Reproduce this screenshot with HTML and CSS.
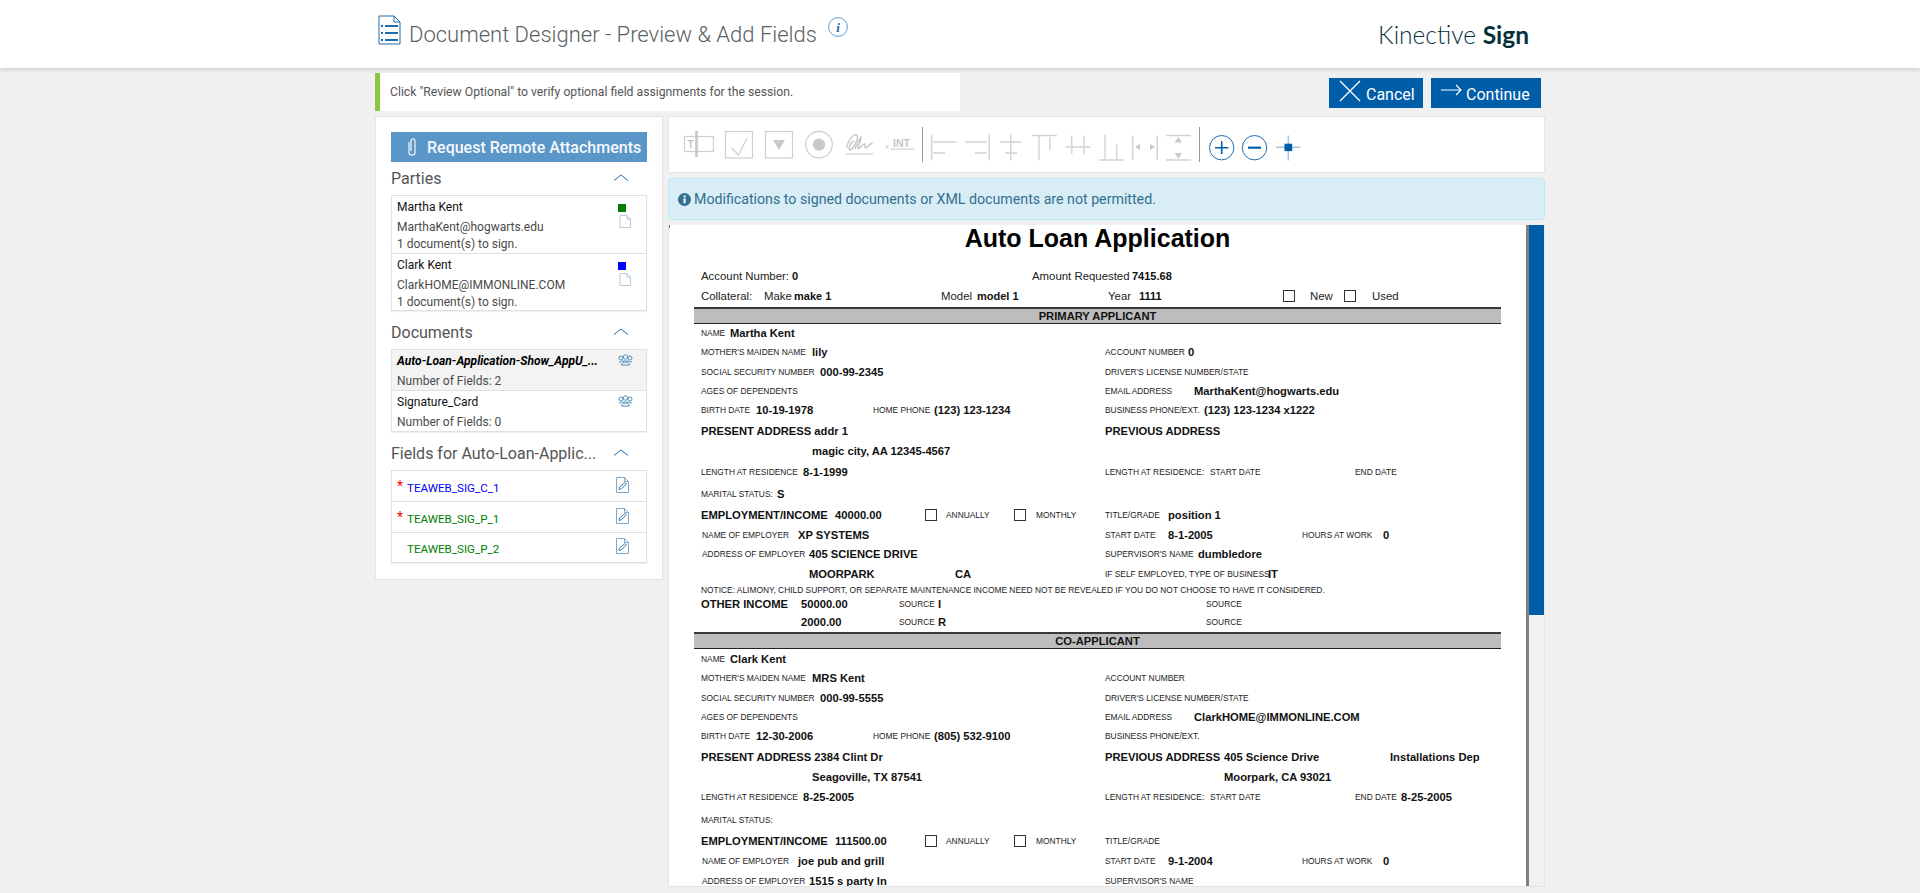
FILE: index.html
```html
<!DOCTYPE html>
<html lang="en">
<head>
<meta charset="utf-8">
<title>Document Designer</title>
<link rel="stylesheet" href="styles.css">
</head>
<body>
<header class="header">
  <div class="wrap header-in">
    <div class="title-group">
      <svg class="doc-icon" viewBox="0 0 23 30" width="23" height="30"><path d="M1 1H16L22 7V29H1Z" fill="none" stroke="#1f6cad" stroke-width="1"/><path d="M16 1V7H22" fill="none" stroke="#1f6cad"/><path d="M7 11H20M7 18H20M7 25H20" stroke="#1f6cad" stroke-width="2"/><path d="M3 11H5M3 18H5M3 25H5" stroke="#1f6cad" stroke-width="2"/></svg>
      <h1 class="title">Document Designer - Preview &amp; Add Fields</h1>
      <svg class="info-icon" viewBox="0 0 20 20" width="20" height="20"><circle cx="10" cy="10" r="9.400" fill="none" stroke="#5b9bcf"/><text x="10" y="14.500" text-anchor="middle" class="info-i">i</text></svg>
    </div>
    <div class="brand">Kinective <b>Sign</b></div>
  </div>
</header>

<div class="wrap">
  <div class="topbar">
    <div class="note">Click "Review Optional" to verify optional field assignments for the session.</div>
    <div class="actions">
      <button class="btn btn-cancel"><svg viewBox="0 0 22 22" width="22" height="22"><path d="M1 1L21 21M21 1L1 21" stroke="#fff" stroke-width="1.3"/></svg>Cancel</button>
      <button class="btn btn-continue"><svg viewBox="0 0 21 12" width="21" height="12"><path d="M0 6H20M15 1L20 6L15 11" fill="none" stroke="#fff" stroke-width="1.2"/></svg>Continue</button>
    </div>
  </div>

  <div class="main">
    <aside class="side">
      <button class="attach"><svg viewBox="0 0 10 20" width="10" height="20"><path d="M2 5V15.500C2 19 8 19 8 15.500V4C8 1.200 4 1.200 4 4V14" fill="none" stroke="#e8f0f8" stroke-width="1.300"/></svg><span>Request Remote Attachments</span></button>

      <div class="sec-head first"><span class="sec-title">Parties</span><svg class="chev" viewBox="0 0 16 7" width="16" height="7"><path d="M1 6.500L8 1L15 6.500" fill="none" stroke="#1f6cad"/></svg></div>
      <div class="list">
        <div class="party">
          <div class="party-text"><div class="pname">Martha Kent</div><div class="pmail">MarthaKent@hogwarts.edu</div><div class="pdoc">1 document(s) to sign.</div></div>
          <div class="party-icons"><span class="swatch green"></span><svg viewBox="0 0 12 13" width="12" height="13"><path d="M1 .5H8L11.500 4V12.500H1Z" fill="#fff" stroke="#b5c9da"/><path d="M8 .5V4H11.500" fill="none" stroke="#b5c9da"/></svg></div>
        </div>
        <div class="party">
          <div class="party-text"><div class="pname">Clark Kent</div><div class="pmail">ClarkHOME@IMMONLINE.COM</div><div class="pdoc">1 document(s) to sign.</div></div>
          <div class="party-icons"><span class="swatch blue"></span><svg viewBox="0 0 12 13" width="12" height="13"><path d="M1 .5H8L11.500 4V12.500H1Z" fill="#fff" stroke="#b5c9da"/><path d="M8 .5V4H11.500" fill="none" stroke="#b5c9da"/></svg></div>
        </div>
      </div>

      <div class="sec-head"><span class="sec-title">Documents</span><svg class="chev" viewBox="0 0 16 7" width="16" height="7"><path d="M1 6.500L8 1L15 6.500" fill="none" stroke="#1f6cad"/></svg></div>
      <div class="list">
        <div class="docrow active">
          <div class="doc-text"><div class="dname">Auto-Loan-Application-Show_AppU_...</div><div class="dcount">Number of Fields: 2</div></div>
          <svg class="people" viewBox="0 0 15 12" width="15" height="12"><g fill="none" stroke="#4f8fb8"><circle cx="3" cy="4" r="2"/><circle cx="12" cy="4" r="2"/><circle cx="7.500" cy="3" r="2.200"/><path d="M1 8.500C2 6.500 13 6.500 14 8.500M3.500 11C3.500 7 11.500 7 11.500 11Z"/></g></svg>
        </div>
        <div class="docrow">
          <div class="doc-text"><div class="dname plain">Signature_Card</div><div class="dcount">Number of Fields: 0</div></div>
          <svg class="people" viewBox="0 0 15 12" width="15" height="12"><g fill="none" stroke="#4f8fb8"><circle cx="3" cy="4" r="2"/><circle cx="12" cy="4" r="2"/><circle cx="7.500" cy="3" r="2.200"/><path d="M1 8.500C2 6.500 13 6.500 14 8.500M3.500 11C3.500 7 11.500 7 11.500 11Z"/></g></svg>
        </div>
      </div>

      <div class="sec-head"><span class="sec-title">Fields for Auto-Loan-Applic...</span><svg class="chev" viewBox="0 0 16 7" width="16" height="7"><path d="M1 6.500L8 1L15 6.500" fill="none" stroke="#1f6cad"/></svg></div>
      <div class="list">
        <div class="field"><span class="star">*</span><span class="fname fblue">TEAWEB_SIG_C_1</span><svg viewBox="0 0 13 16" width="13" height="16"><path d="M.5.5H8.500L12.500 4.500V15.500H.5Z" fill="#fff" stroke="#7fa8c8"/><path d="M8.500.5V4.500H12.500" fill="none" stroke="#7fa8c8"/><path d="M3 12.500L3.600 10L9 5.500L10.500 7L5.200 11.800Z" fill="none" stroke="#3f7fb0"/></svg></div>
        <div class="field"><span class="star">*</span><span class="fname fgreen">TEAWEB_SIG_P_1</span><svg viewBox="0 0 13 16" width="13" height="16"><path d="M.5.5H8.500L12.500 4.500V15.500H.5Z" fill="#fff" stroke="#7fa8c8"/><path d="M8.500.5V4.500H12.500" fill="none" stroke="#7fa8c8"/><path d="M3 12.500L3.600 10L9 5.500L10.500 7L5.200 11.800Z" fill="none" stroke="#3f7fb0"/></svg></div>
        <div class="field"><span class="star"></span><span class="fname fgreen">TEAWEB_SIG_P_2</span><svg viewBox="0 0 13 16" width="13" height="16"><path d="M.5.5H8.500L12.500 4.500V15.500H.5Z" fill="#fff" stroke="#7fa8c8"/><path d="M8.500.5V4.500H12.500" fill="none" stroke="#7fa8c8"/><path d="M3 12.500L3.600 10L9 5.500L10.500 7L5.200 11.800Z" fill="none" stroke="#3f7fb0"/></svg></div>
      </div>
    </aside>

    <section class="content">
      <div class="toolbar">
        <div class="tgroup g1">
          <svg viewBox="0 0 40 32"><rect x="5.500" y="7.500" width="29" height="15" class="ln"/><path d="M17.500 2V28" class="ln3"/><text x="8.500" y="19" class="tt">T</text></svg>
          <svg viewBox="0 0 40 32"><rect x="6.500" y="2.500" width="27" height="26.500" class="ln"/><path d="M12.500 19L19.500 26L28 9" class="ln"/></svg>
          <svg viewBox="0 0 40 32"><rect x="6.500" y="2.500" width="27" height="26.500" class="ln"/><path d="M14 11H26L20 21Z" class="fl"/></svg>
          <svg viewBox="0 0 40 32"><circle cx="20" cy="15.600" r="13.300" class="ln"/><circle cx="20" cy="15.600" r="6.200" class="fl"/></svg>
          <svg viewBox="0 0 40 32"><path d="M8 19C8 12 15 4 18 6C20 9 14 21 11 21C9 21 11 13 15 12M16 20C18 16 20 10 22 8C23 9 18 20 19 20C21 20 24 14 26 15C25 18 26 20 28 18C29 17 31 15 33.500 14" class="ln4"/><path d="M6.500 25H34" class="ln"/></svg>
          <svg viewBox="0 0 40 32"><text x="6" y="20" class="tx">x</text><text x="14" y="18.200" class="ti">INT</text><path d="M11.500 20H35.500" class="ln"/></svg>
        </div>
        <span class="tsep s1"></span>
        <div class="tgroup g2">
          <svg viewBox="0 0 34 32"><path d="M8.700 5.500V31.500" class="lv"/><path d="M10 13H33.500M10 24H22" class="ln2"/></svg>
          <svg viewBox="0 0 34 32"><path d="M32.300 5.500V31.500" class="lv"/><path d="M8 13H29.700M18 24H29.700" class="ln2"/></svg>
          <svg viewBox="0 0 34 32"><path d="M19.700 5.500V31.500" class="lv"/><path d="M9 13H30.700M14 24H26" class="ln2"/></svg>
          <svg viewBox="0 0 34 32"><path d="M7.300 6.500H31.700" class="ln2"/><path d="M14 6.500V31.500M25 8V21.500" class="lv"/></svg>
          <svg viewBox="0 0 34 32"><path d="M6.700 18H31.700" class="ln2"/><path d="M12.700 6.500V25M25 6.500V25" class="lv"/></svg>
          <svg viewBox="0 0 34 32"><path d="M6 31H31" class="ln2"/><path d="M12 5.500V31M23.700 15.500V31" class="lv"/></svg>
          <svg viewBox="0 0 34 32"><path d="M5.700 6.500V31M30.300 6.500V31" class="lv"/><path d="M8 18L13 15V21ZM28 18L23 15V21Z" class="fl"/></svg>
          <svg viewBox="0 0 34 32"><path d="M5 6.500H30M5 31H30" class="ln2"/><path d="M17.300 8L21 13.500H13.600ZM17.300 29.500L13.600 24H21Z" class="fl"/></svg>
        </div>
        <span class="tsep s2"></span>
        <div class="tgroup g3">
          <svg viewBox="0 0 33.500 32"><circle cx="16.700" cy="18.700" r="12.200" class="bl"/><path d="M10 18.700H23.400M16.700 12.300V25" class="bl2"/></svg>
          <svg viewBox="0 0 33.500 32"><circle cx="16.500" cy="18.700" r="12.200" class="bl"/><path d="M10 18.700H23" class="bl3"/></svg>
          <svg viewBox="0 0 33.500 32"><path d="M4 18.300H28.500M16.300 6.500V31.500" class="lb"/><rect x="12.500" y="14.700" width="7.700" height="7.400" class="sq"/></svg>
        </div>
      </div>

      <div class="alert"><svg viewBox="0 0 13 13" width="13" height="13"><circle cx="6.500" cy="6.500" r="6.500" fill="#31708f"/><rect x="5.400" y="5.300" width="2.400" height="5" fill="#d9edf7"/><rect x="5.400" y="2.500" width="2.400" height="1.900" fill="#d9edf7"/></svg><span>Modifications to signed documents or XML documents are not permitted.</span></div>

      <div class="viewer">
        <div class="page">
          <div class="doc-title">Auto Loan Application</div>
          <div class="r h20 mt15 t"><span class="c u91">Account Number:</span><b class="c u240">0</b><span class="c u100">Amount Requested</span><b>7415.68</b></div>
          <div class="r h20 t"><span class="c u63">Collateral:</span><span class="c u30">Make</span><b class="c u147">make 1</b><span class="c u36">Model</span><b class="c u131">model 1</b><span class="c u31">Year</span><b class="c u144">1111</b><span class="c u27"><i class="box"></i></span><span class="c u34">New</span><span class="c u28"><i class="box"></i></span><span>Used</span></div>
          <div class="bar mt1">PRIMARY APPLICANT</div>

          <div class="r h18"><div class="l"><span class="c u29">NAME</span><b>Martha Kent</b></div></div>
          <div class="r h20"><div class="l"><span class="c u111">MOTHER'S MAIDEN NAME</span><b>lily</b></div><div class="rc"><span class="c u83">ACCOUNT NUMBER</span><b>0</b></div></div>
          <div class="r h20"><div class="l"><span class="c u119">SOCIAL SECURITY NUMBER</span><b>000-99-2345</b></div><div class="rc"><span>DRIVER'S LICENSE NUMBER/STATE</span></div></div>
          <div class="r h18"><div class="l"><span>AGES OF DEPENDENTS</span></div><div class="rc"><span class="c u89">EMAIL ADDRESS</span><b>MarthaKent@hogwarts.edu</b></div></div>
          <div class="r h20"><div class="l"><span class="c u55">BIRTH DATE</span><b class="c u117">10-19-1978</b><span class="c u61">HOME PHONE</span><b>(123) 123-1234</b></div><div class="rc"><span class="c u99">BUSINESS PHONE/EXT.</span><b>(123) 123-1234 x1222</b></div></div>
          <div class="r h22"><div class="l"><b>PRESENT ADDRESS addr 1</b></div><div class="rc"><b>PREVIOUS ADDRESS</b></div></div>
          <div class="r h18"><div class="l"><span class="c u111"></span><b>magic city, AA 12345-4567</b></div></div>
          <div class="r h24"><div class="l"><span class="c u102">LENGTH AT RESIDENCE</span><b>8-1-1999</b></div><div class="rc"><span class="c u105">LENGTH AT RESIDENCE:</span><span class="c u145">START DATE</span><span>END DATE</span></div></div>
          <div class="r h20"><div class="l"><span class="c u76">MARITAL STATUS:</span><b>S</b></div></div>
          <div class="r h22"><div class="l"><b class="c u134">EMPLOYMENT/INCOME</b><b class="c u90">40000.00</b><span class="c u21"><i class="box"></i></span><span class="c u68">ANNUALLY</span><span class="c u22"><i class="box"></i></span><span>MONTHLY</span></div><div class="rc"><span class="c u63">TITLE/GRADE</span><b>position 1</b></div></div>
          <div class="r h17"><div class="l in1"><span class="c u96">NAME OF EMPLOYER</span><b>XP SYSTEMS</b></div><div class="rc"><span class="c u63">START DATE</span><b class="c u134">8-1-2005</b><span class="c u81">HOURS AT WORK</span><b>0</b></div></div>
          <div class="r h21"><div class="l in1"><span class="c u107">ADDRESS OF EMPLOYER</span><b>405 SCIENCE DRIVE</b></div><div class="rc"><span class="c u93">SUPERVISOR'S NAME</span><b>dumbledore</b></div></div>
          <div class="r h20"><div class="l"><span class="c u108"></span><b class="c u146">MOORPARK</b><b>CA</b></div><div class="rc"><span class="c u163">IF SELF EMPLOYED, TYPE OF BUSINESS</span><b>IT</b></div></div>
          <div class="r h12"><span>NOTICE: ALIMONY, CHILD SUPPORT, OR SEPARATE MAINTENANCE INCOME NEED NOT BE REVEALED IF YOU DO NOT CHOOSE TO HAVE IT CONSIDERED.</span></div>
          <div class="r h16"><div class="l"><b class="c u100">OTHER INCOME</b><b class="c u98">50000.00</b><span class="c u39">SOURCE</span><b>I</b></div><div class="rc"><span class="c u101"></span><span>SOURCE</span></div></div>
          <div class="r h20"><div class="l"><span class="c u100"></span><b class="c u98">2000.00</b><span class="c u39">SOURCE</span><b>R</b></div><div class="rc"><span class="c u101"></span><span>SOURCE</span></div></div>
          <div class="bar">CO-APPLICANT</div>

          <div class="r h20"><div class="l"><span class="c u29">NAME</span><b>Clark Kent</b></div></div>
          <div class="r h18"><div class="l"><span class="c u111">MOTHER'S MAIDEN NAME</span><b>MRS Kent</b></div><div class="rc"><span>ACCOUNT NUMBER</span></div></div>
          <div class="r h22"><div class="l"><span class="c u119">SOCIAL SECURITY NUMBER</span><b>000-99-5555</b></div><div class="rc"><span>DRIVER'S LICENSE NUMBER/STATE</span></div></div>
          <div class="r h16"><div class="l"><span>AGES OF DEPENDENTS</span></div><div class="rc"><span class="c u89">EMAIL ADDRESS</span><b>ClarkHOME@IMMONLINE.COM</b></div></div>
          <div class="r h22"><div class="l"><span class="c u55">BIRTH DATE</span><b class="c u117">12-30-2006</b><span class="c u61">HOME PHONE</span><b>(805) 532-9100</b></div><div class="rc"><span>BUSINESS PHONE/EXT.</span></div></div>
          <div class="r h20"><div class="l"><b>PRESENT ADDRESS 2384 Clint Dr</b></div><div class="rc"><b class="c u119">PREVIOUS ADDRESS</b><b class="c u166">405 Science Drive</b><b>Installations Dep</b></div></div>
          <div class="r h20"><div class="l"><span class="c u111"></span><b>Seagoville, TX 87541</b></div><div class="rc"><span class="c u119"></span><b>Moorpark, CA 93021</b></div></div>
          <div class="r h20"><div class="l"><span class="c u102">LENGTH AT RESIDENCE</span><b>8-25-2005</b></div><div class="rc"><span class="c u105">LENGTH AT RESIDENCE:</span><span class="c u145">START DATE</span><span class="c u46">END DATE</span><b>8-25-2005</b></div></div>
          <div class="r h26"><div class="l"><span>MARITAL STATUS:</span></div></div>
          <div class="r h16"><div class="l"><b class="c u134">EMPLOYMENT/INCOME</b><b class="c u90">111500.00</b><span class="c u21"><i class="box"></i></span><span class="c u68">ANNUALLY</span><span class="c u22"><i class="box"></i></span><span>MONTHLY</span></div><div class="rc"><span>TITLE/GRADE</span></div></div>
          <div class="r h24"><div class="l in1"><span class="c u96">NAME OF EMPLOYER</span><b>joe pub and grill</b></div><div class="rc"><span class="c u63">START DATE</span><b class="c u134">9-1-2004</b><span class="c u81">HOURS AT WORK</span><b>0</b></div></div>
          <div class="r h16"><div class="l in1"><span class="c u107">ADDRESS OF EMPLOYER</span><b>1515 s party ln</b></div><div class="rc"><span>SUPERVISOR'S NAME</span></div></div>
        </div>
        <div class="edge"></div>
        <div class="scroll"><div class="thumb"></div></div>
      </div>
    </section>
  </div>
</div>
</body>
</html>
```
FILE: styles.css
```css
* { box-sizing: border-box; }
html, body { margin: 0; height: 100%; }
body { background: #f0f0f0; font-family: Roboto, "Liberation Sans", sans-serif; overflow: hidden; }
.wrap { width: 1174px; margin: 0 auto; }

.header { height: 68px; background: #fff; box-shadow: 0 1px 5px rgba(0,0,0,.18); }
.header-in { display: flex; justify-content: space-between; padding: 15px 18px 0 5px; }
.title-group { display: flex; align-items: flex-start; }
.doc-icon { display: block; flex: none; }
.title { margin: 6px 0 0 8px; font-size: 22px; line-height: 28px; font-weight: 300; color: #5a5f66; white-space: nowrap; }
.info-icon { margin: 2px 0 0 11px; flex: none; }
.info-i { font: italic 700 13px "Liberation Serif", serif; fill: #1f5f99; }
.brand { margin-top: 7px; font-family: Lato, sans-serif; font-weight: 300; font-size: 24.5px; line-height: 26px; color: #07303a; }
.brand b { font-weight: 700; }

.topbar { display: flex; justify-content: space-between; padding: 5px 6px 0 2px; height: 48px; }
.note { width: 585px; height: 38px; background: #fff; border-left: 5px solid #8dc63f; padding-left: 10px; font-size: 12.2px; line-height: 38px; color: #555; }
.actions { display: flex; gap: 8px; padding-top: 5px; }
.btn { height: 30px; background: #005da8; border: 0; color: #fff; font: 400 16px Roboto, sans-serif; display: flex; align-items: center; padding: 3px 0 0 10px; }
.btn-cancel { width: 94px; }
.btn-cancel svg { margin: -8px 5px 0 0; flex: none; }
.btn-continue { width: 110px; }
.btn-continue svg { margin: -10px 4px 0 0; flex: none; }

.main { display: flex; gap: 5px; align-items: flex-start; padding-left: 2px; }
.side { width: 288px; flex: none; background: #fff; border: 1px solid #e4e4e4; padding: 15px 15px 16px; }
.attach { width: 256px; height: 30px; background: #5a96c8; border: 0; color: #f4f8fc; font: 500 16px Roboto, sans-serif; display: flex; align-items: center; padding: 0 0 0 16px; white-space: nowrap; }
.attach svg { margin-right: 10px; flex: none; }
.sec-head { display: flex; justify-content: space-between; align-items: center; height: 38px; padding: 4px 18px 0 0; }
.sec-head.first { height: 33px; padding-top: 0; }
.sec-title { font-size: 16px; font-weight: 400; color: #555; white-space: nowrap; }
.chev { margin-top: -2px; }
.list { border: 1px solid #e0e0e0; background: #fff; box-shadow: 0 1px 1px rgba(0,0,0,.06); }

.party { display: flex; justify-content: space-between; height: 58px; padding: 0 16px 0 5px; border-bottom: 1px solid #e0e0e0; }
.party:last-child { border-bottom: 0; height: 56px; }
.pname { font-size: 12px; line-height: 22px; color: #111; }
.pmail { font-size: 12px; line-height: 18px; color: #4a4a4a; }
.pdoc { font-size: 12px; line-height: 17px; color: #4a4a4a; }
.party-icons { display: flex; flex-direction: column; align-items: flex-start; width: 12px; padding-top: 8px; }
.party-icons svg { margin: 3px 0 0 1px; }
.swatch { display: block; width: 8px; height: 8px; }
.green { background: #007f00; }
.blue { background: #0000ff; }

.docrow { display: flex; justify-content: space-between; height: 41px; padding: 0 13px 0 5px; border-bottom: 1px solid #e0e0e0; }
.docrow:last-child { border-bottom: 0; height: 40px; }
.docrow.active { background: #f3f3f3; }
.doc-text { width: 215px; }
.dname { font-size: 12px; line-height: 22px; font-weight: 700; font-style: italic; color: #000; white-space: nowrap; }
.dname.plain { font-weight: 400; font-style: normal; color: #111; }
.dcount { font-size: 12px; line-height: 18px; color: #4a4a4a; }
.people { margin-top: 4px; flex: none; }

.field { display: flex; align-items: center; height: 31px; padding: 0 17px 0 5px; border-bottom: 1px solid #e0e0e0; }
.field:last-child { border-bottom: 0; height: 29px; }
.field svg { margin-left: auto; margin-top: -3px; }
.star { width: 10px; color: #f00; font-size: 14px; }
.fname { font-size: 11.6px; margin-top: 3px; }
.fblue { color: #0000ff; }
.fgreen { color: #007f00; }

.content { flex: none; width: 877px; display: flex; flex-direction: column; gap: 5px; }
.toolbar { height: 57px; background: #fff; border: 1px solid #e4e4e4; display: flex; align-items: center; padding-left: 9.5px; }
.tgroup { display: flex; flex: none; }
.tgroup svg { height: 32px; display: block; flex: none; }
.g1 svg { width: 40px; }
.g2 svg { width: 34px; }
.g3 svg { width: 33.5px; }
.tsep { width: 1px; height: 35px; background: #999; flex: none; }
.s1 { margin-left: 3.5px; }
.s2 { margin-left: 4px; }
.g3 { margin-left: 4.5px; }
.ln { fill: none; stroke: #cfcfcf; stroke-width: 1.2; }
.ln2 { fill: none; stroke: #d2d2d2; stroke-width: 1.5; }
.ln3 { fill: none; stroke: #c8c8c8; stroke-width: 2.6; }
.ln4 { fill: none; stroke: #c6c6c6; stroke-width: 1.4; }
.lv { fill: none; stroke: #d2d6de; stroke-width: 1.5; }
.fl { fill: #c9c9c9; }
.tt { font: 700 10px "Liberation Sans", sans-serif; fill: #c4c4c4; }
.ti { font: 700 10.5px "Liberation Sans", sans-serif; fill: #c4c4c4; }
.tx { font: 400 7px "Liberation Sans", sans-serif; fill: #c4c4c4; }
.bl { fill: none; stroke: #1f6cad; stroke-width: 1; }
.bl2 { fill: none; stroke: #005da8; stroke-width: 1.6; }
.bl3 { fill: none; stroke: #005da8; stroke-width: 2.2; }
.lb { fill: none; stroke: #a9c3da; stroke-width: 1.5; }
.sq { fill: #005da8; }

.alert { height: 42px; background: #d9edf7; border: 1px solid #bce8f1; border-radius: 4px; display: flex; align-items: center; gap: 3px; padding-left: 9px; font-size: 14.2px; color: #31708f; }

.viewer { height: 662px; display: flex; background: #fff; border: 1px solid #e4e4e4; border-top: 0; overflow: hidden; }
.page { flex: 1; position: relative; padding: 0 25px; overflow: hidden; font-family: "Liberation Sans", Arial, sans-serif; font-size: 8.4px; color: #222; }
.page::before { content: ""; position: absolute; left: 0; top: 0; width: 1px; height: 3px; background: #777; }
.edge { width: 3px; flex: none; background: #808080; }
.scroll { width: 15px; flex: none; background: #f1f1f1; }
.thumb { height: 390px; background: #005da8; }

.doc-title { height: 26px; line-height: 26px; font-size: 25px; font-weight: 700; color: #000; text-align: center; }
.bar { height: 17px; background: #bdbdbd; border-top: 2px solid #3a3a3a; border-bottom: 1px solid #222; text-align: center; font-size: 11.2px; line-height: 14px; font-weight: 700; color: #111; }
.r { display: flex; align-items: center; padding-left: 7px; white-space: nowrap; }
.r b { font-size: 11.2px; font-weight: 700; color: #111; }
.t { font-size: 11.4px; }
.t b { font-size: 11px; }
.l { width: 404px; flex: none; display: flex; align-items: center; }
.rc { display: flex; align-items: center; }
.in1 { padding-left: 1px; }
.c { display: block; flex: none; }
.box { display: block; width: 12px; height: 12px; border: 1.5px solid #333; }
.mt15 { margin-top: 15px; }
.mt1 { margin-top: 1px; }

.h12 { height: 12px; } .h16 { height: 16px; } .h17 { height: 17px; } .h18 { height: 18px; }
.h20 { height: 20px; } .h21 { height: 21px; } .h22 { height: 22px; } .h24 { height: 24px; } .h26 { height: 26px; }

.u21 { width: 21px; } .u22 { width: 22px; } .u27 { width: 27px; } .u28 { width: 28px; } .u29 { width: 29px; }
.u30 { width: 30px; } .u31 { width: 31px; } .u34 { width: 34px; } .u36 { width: 36px; } .u39 { width: 39px; }
.u46 { width: 46px; } .u55 { width: 55px; } .u61 { width: 61px; } .u63 { width: 63px; } .u68 { width: 68px; }
.u76 { width: 76px; } .u81 { width: 81px; } .u83 { width: 83px; } .u89 { width: 89px; } .u90 { width: 90px; }
.u91 { width: 91px; } .u93 { width: 93px; } .u96 { width: 96px; } .u98 { width: 98px; } .u99 { width: 99px; }
.u100 { width: 100px; } .u101 { width: 101px; } .u102 { width: 102px; } .u105 { width: 105px; } .u107 { width: 107px; }
.u108 { width: 108px; } .u111 { width: 111px; } .u117 { width: 117px; } .u119 { width: 119px; } .u131 { width: 131px; }
.u134 { width: 134px; } .u144 { width: 144px; } .u145 { width: 145px; } .u146 { width: 146px; } .u147 { width: 147px; }
.u163 { width: 163px; } .u166 { width: 166px; } .u240 { width: 240px; }
```
